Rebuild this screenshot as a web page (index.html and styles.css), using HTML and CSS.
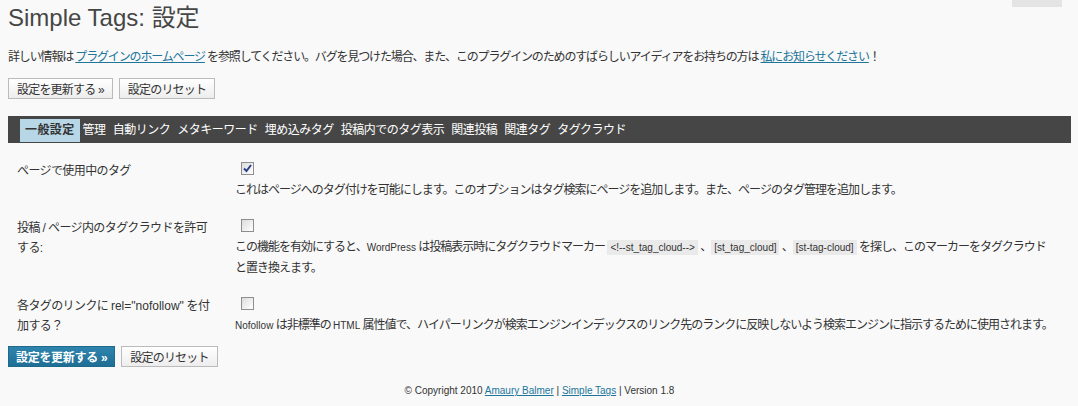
FILE: index.html
```html
<!DOCTYPE html>
<html lang="ja">
<head>
  <meta charset="UTF-8" />
  <title>Simple Tags: 設定</title>
  <link rel="stylesheet" href="styles.css">
</head>
<body>
  <div class="help-tab"></div>

  <div class="wrap">
    <h2>Simple Tags: 設定</h2>

    <p class="intro">詳しい情報は <a href="#">プラグインのホームページ</a> を参照してください。バグを見つけた場合、また、このプラグインのためのすばらしいアイディアをお持ちの方は <a href="#">私にお知らせください</a>！</p>

    <div class="buttons">
      <button class="button">設定を更新する &raquo;</button>
      <button class="button">設定のリセット</button>
    </div>

    <ul class="tabs">
      <li class="active">一般設定</li>
      <li>管理</li>
      <li>自動リンク</li>
      <li>メタキーワード</li>
      <li>埋め込みタグ</li>
      <li>投稿内でのタグ表示</li>
      <li>関連投稿</li>
      <li>関連タグ</li>
      <li>タグクラウド</li>
    </ul>

    <table class="form-table">
      <tr>
        <th>ページで使用中のタグ</th>
        <td>
          <span class="check">
            <svg width="9" height="9" viewBox="0 0 9 9"><path d="M1 4.5 L3.5 7 L8 1" fill="none" stroke="#2b3f8c" stroke-width="2"/></svg>
          </span>
          <div class="desc">これはページへのタグ付けを可能にします。このオプションはタグ検索にページを追加します。また、ページのタグ管理を追加します。</div>
        </td>
      </tr>
      <tr>
        <th>投稿 / ページ内のタグクラウドを許可する:</th>
        <td>
          <span class="check"></span>
          <div class="desc narrow">この機能を有効にすると、<span class="small">WordPress</span> は投稿表示時にタグクラウドマーカー <code>&lt;!--st_tag_cloud--&gt;</code> 、<code>[st_tag_cloud]</code> 、<code>[st-tag-cloud]</code> を探し、このマーカーをタグクラウドと置き換えます。</div>
        </td>
      </tr>
      <tr class="last">
        <th>各タグのリンクに <span class="latin">rel="nofollow"</span> を付加する？</th>
        <td>
          <span class="check"></span>
          <div class="desc"><span class="small">Nofollow</span> は非標準の <span class="small">HTML</span> 属性値で、ハイパーリンクが検索エンジンインデックスのリンク先のランクに反映しないよう検索エンジンに指示するために使用されます。</div>
        </td>
      </tr>
    </table>

    <div class="buttons bottom">
      <button class="button primary">設定を更新する &raquo;</button>
      <button class="button">設定のリセット</button>
    </div>

    <p class="footer">&copy; Copyright 2010 <a href="#">Amaury Balmer</a> | <a href="#">Simple Tags</a> | Version 1.8</p>
  </div>
</body>
</html>
```

FILE: styles.css
```css
body {
  margin: 0;
  background: #f9f9f9;
  color: #333;
  font-family: "Liberation Sans", "Noto Sans CJK JP", sans-serif;
  font-size: 12px;
}
a {
  color: #21759b;
}
.help-tab {
  position: absolute;
  top: 0;
  left: 1012px;
  width: 50px;
  height: 7px;
  background: #e4e4e4;
}
.wrap {
  padding: 0 7px 0 8px;
}
h2 {
  margin: 0;
  padding-top: 3px;
  font-size: 24px;
  font-weight: normal;
  color: #464646;
  line-height: 29px;
}
.intro {
  margin: 17px 0 0;
  line-height: 16px;
  letter-spacing: -1.15px;
}
.buttons {
  display: flex;
  gap: 6px;
  margin-top: 13px;
}
.button {
  height: 21px;
  padding: 0 8px;
  border: 1px solid #bbb;
  background: linear-gradient(#fff, #ededed);
  font-family: inherit;
  font-size: 12px;
  letter-spacing: -0.8px;
  color: #333;
}
.button.primary {
  border-color: #1e6a8d;
  background: linear-gradient(#2e84ae, #1f6e95);
  color: #fff;
  font-weight: bold;
  letter-spacing: -0.3px;
  padding: 0 7px;
}
.tabs {
  display: flex;
  gap: 7px;
  list-style: none;
  margin: 17px 0 0;
  padding: 3px 12px 1px 12px;
  background: #464646;
}
.tabs li {
  color: #fff;
  line-height: 23px;
  letter-spacing: -0.5px;
}
.tabs li.active {
  background: #b7d6e6;
  color: #333;
  font-weight: bold;
  letter-spacing: 0.4px;
  padding: 0 5px;
  margin-right: -4px;
}
.form-table {
  border-collapse: collapse;
  margin-top: 12px;
}
.form-table th {
  width: 200px;
  padding: 6px 9px 11px 9px;
  text-align: left;
  vertical-align: top;
  font-weight: normal;
  line-height: 20px;
  letter-spacing: -0.6px;
}
.form-table td {
  padding: 4px 0 11px 9px;
  vertical-align: top;
  line-height: 21px;
}
.form-table .last th,
.form-table .last td {
  padding-bottom: 4px;
}
.latin {
  letter-spacing: 0;
}
.check {
  display: inline-flex;
  align-items: center;
  justify-content: center;
  width: 11px;
  height: 11px;
  margin: 3px 0 0 6px;
  border: 1px solid #8e8e8e;
  background: linear-gradient(135deg, #dcdcdc, #fff);
  vertical-align: top;
}
.desc {
  width: 830px;
  letter-spacing: -1px;
}
.desc.narrow {
  width: 818px;
}
.small {
  font-size: 10px;
  letter-spacing: 0;
}
code {
  font-family: "Liberation Sans", sans-serif;
  font-size: 10px;
  background: #eaeaea;
  padding: 2px 3px;
  letter-spacing: 0;
}
.bottom {
  margin-top: 6px;
}
.footer {
  text-align: center;
  font-size: 10px;
  margin: 18px 0 0;
}
```
